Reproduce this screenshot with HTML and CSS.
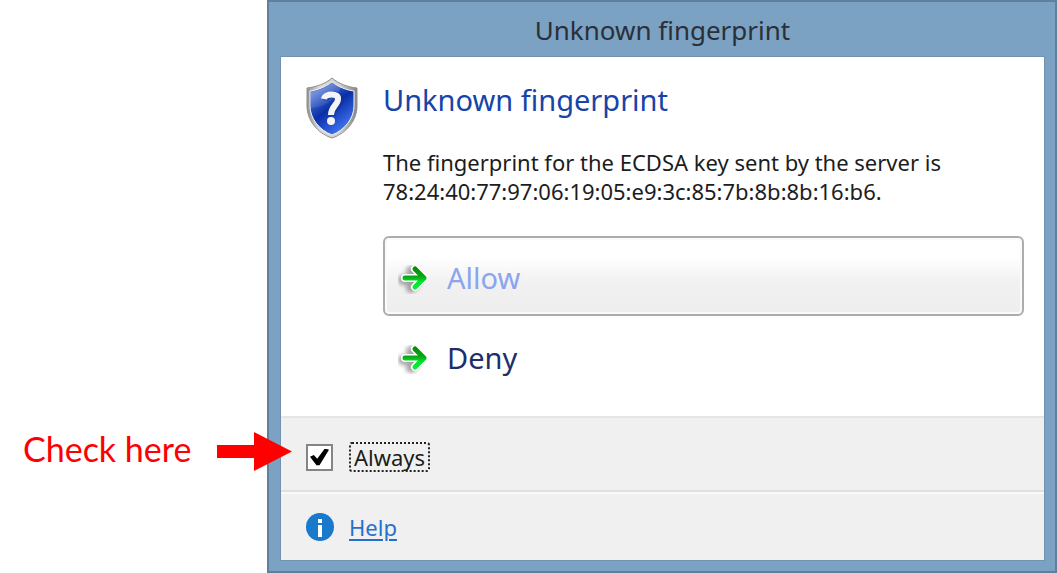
FILE: index.html
```html
<!DOCTYPE html>
<html lang="en">
<head>
<meta charset="utf-8">
<title>Unknown fingerprint</title>
<link rel="stylesheet" href="styles.css">
</head>
<body>
<div class="stage">
  <aside class="callout">
    <span class="callout-text">Check here</span>
    <svg class="callout-arrow" viewBox="0 0 75 39" aria-hidden="true"><path fill="#f00" d="M0 13H37V0L75 19.5 37 39V26H0z"/></svg>
  </aside>
  <section class="window" role="dialog" aria-labelledby="window-title">
    <header class="titlebar" id="window-title">Unknown fingerprint</header>
    <div class="client">
      <main class="message">
        <svg class="shield" viewBox="0 0 54 62" aria-hidden="true">
          <defs>
            <linearGradient id="rim" x2="1" y2="0"><stop offset="0" stop-color="#909291"/><stop offset=".25" stop-color="#dcdcdc"/><stop offset=".65" stop-color="#d0d0d0"/><stop offset="1" stop-color="#858786"/></linearGradient>
            <linearGradient id="blue" x1="0" y1="0" x2=".65" y2="1"><stop offset="0" stop-color="#6c8de0"/><stop offset=".42" stop-color="#2148b8"/><stop offset=".55" stop-color="#0b2ea8"/><stop offset="1" stop-color="#4377f4"/></linearGradient>
            <linearGradient id="shine" x2=".6" y2="1"><stop offset="0" stop-color="#fff" stop-opacity=".35"/><stop offset="1" stop-color="#fff" stop-opacity=".02"/></linearGradient>
          </defs>
          <path d="M27 1C20 7 11 10 2 11V29C2 43 12 56 27 61 42 56 52 43 52 29V11C43 10 34 7 27 1z" fill="url(#rim)" stroke="#8d8f8e"/>
          <path d="M27 5C20 10 13 13 5 14V29C5 41 14 53 27 58 40 53 49 41 49 29V14C41 13 34 10 27 5z" fill="url(#blue)" stroke="#f5f5f5"/>
          <path d="M27 6C20 11 13 14 6 15V31C17 31 31 24 36 10 33 9 30 8 27 6z" fill="url(#shine)"/>
          <path d="M20 23C22 16 36 16 35 23 35 29 27 30 27 39" fill="none" stroke="#162f86" stroke-opacity=".5" stroke-width="7"/>
          <path d="M19 22C20 16 34 16 33 22 33 28 26 29 26 38" fill="none" stroke="#f3f4f8" stroke-width="6"/>
          <circle cx="26" cy="44" r="4" fill="#f3f4f8"/>
        </svg>
        <div class="message-body">
          <h1 class="heading">Unknown fingerprint</h1>
          <p class="details">The fingerprint for the ECDSA key sent by the server is<br>78:24:40:77:97:06:19:05:e9:3c:85:7b:8b:8b:16:b6.</p>
          <button type="button" class="command command-active">
            <svg class="command-icon" viewBox="0 0 32 36" aria-hidden="true">
              <defs>
                <linearGradient id="green" gradientUnits="userSpaceOnUse" x1="0" y1="6" x2="0" y2="30"><stop offset="0" stop-color="#078507"/><stop offset=".45" stop-color="#08aa12"/><stop offset=".65" stop-color="#04e32c"/><stop offset="1" stop-color="#08f03d"/></linearGradient>
                <filter id="soft" x="-30%" y="-30%" width="160%" height="160%"><feGaussianBlur stdDeviation="2"/></filter>
              </defs>
              <g fill="none" stroke-linecap="round" stroke-linejoin="round">
                <path d="M6 20H19M14 11L22 19 14 28" stroke="#777" stroke-opacity=".65" stroke-width="10" filter="url(#soft)"/>
                <path d="M8 18H27M18 9L27 18 18 27" stroke="#fff" stroke-width="8"/>
                <path d="M8 18H27M18 9L27 18 18 27" stroke="url(#green)" stroke-width="5"/>
              </g>
            </svg>
            <span>Allow</span>
          </button>
          <button type="button" class="command">
            <svg class="command-icon" viewBox="0 0 32 36" aria-hidden="true">
              <g fill="none" stroke-linecap="round" stroke-linejoin="round">
                <path d="M6 20H19M14 11L22 19 14 28" stroke="#777" stroke-opacity=".65" stroke-width="10" filter="url(#soft)"/>
                <path d="M8 18H27M18 9L27 18 18 27" stroke="#fff" stroke-width="8"/>
                <path d="M8 18H27M18 9L27 18 18 27" stroke="url(#green)" stroke-width="5"/>
              </g>
            </svg>
            <span>Deny</span>
          </button>
        </div>
      </main>
      <div class="row options">
        <input class="check" type="checkbox" id="always" checked>
        <label class="check-label" for="always">Always</label>
      </div>
      <footer class="row help">
        <svg class="info" viewBox="0 0 28 28" aria-hidden="true"><circle cx="14" cy="14" r="14" fill="#1979ca"/><path fill="#fff" d="M12 6h4v4h-4zM12 12h4v12h-4z"/></svg>
        <a class="help-link" href="#help">Help</a>
      </footer>
    </div>
  </section>
</div>
</body>
</html>
```
FILE: styles.css
```css
* { box-sizing: border-box; }

body {
  margin: 0;
  background: #fff;
  color: #1c1c1c;
  font-family: "Noto Sans", "Open Sans", sans-serif;
}

.stage {
  display: grid;
  grid-template-columns: 267px 1fr;
  min-height: 100vh;
}

.callout {
  z-index: 1;
  display: flex;
  align-items: center;
  justify-content: space-between;
  align-self: end;
  margin: 0 -25px 100px 23px;
  color: #f00;
  font-family: Lato, "Open Sans", sans-serif;
  font-size: 34px;
  line-height: 40px;
  white-space: nowrap;
}

.callout-text { padding-bottom: 4px; }

.callout-arrow { width: 75px; height: 39px; flex: none; }

.window {
  display: flex;
  flex-direction: column;
  padding: 0 11px 11px 12px;
  border: 2px solid #5f7f9c;
  background: #7ba1c3;
}

.titlebar {
  padding: 7px 0 6px;
  font-size: 26px;
  line-height: 42px;
  text-align: center;
  color: #2a2f38;
}

.client {
  display: flex;
  flex: 1;
  flex-direction: column;
  background: #f0f0f0;
  box-shadow: 0 0 0 1px #7092b0;
}

.message {
  display: flex;
  flex: 1;
  gap: 24px;
  padding: 20px 20px 16px 24px;
  background: #fff;
}

.shield { flex: none; width: 54px; height: 62px; }

.message-body { flex: 1; }

.heading {
  margin: 3px 0 28px;
  color: #1644a8;
  font-size: 29px;
  font-weight: 400;
  line-height: 40px;
}

.details {
  margin: 0 0 30px;
  font-size: 22px;
  line-height: 29px;
}

.command {
  display: flex;
  align-items: center;
  gap: 18px;
  width: 100%;
  height: 80px;
  padding: 4px 12px 0;
  border: 2px solid transparent;
  border-radius: 6px;
  background: none;
  color: #1d2f6b;
  font-family: inherit;
  font-size: 29px;
  line-height: 40px;
}

.command-active {
  border-color: #adadad;
  background: linear-gradient(#fff 25%, #f1f1f1 60%, #eee);
  box-shadow: inset 0 0 0 2px #fafafa;
  color: #8aa5ee;
}

.command-icon { width: 32px; height: 36px; }

.row {
  display: flex;
  align-items: center;
  padding: 0 25px;
}

.options {
  height: 76px;
  gap: 16px;
  padding-top: 6px;
  border-top: 2px solid #e5e5e5;
  border-bottom: 2px solid #dfdfdf;
}

.check {
  appearance: none;
  width: 27px;
  height: 27px;
  margin: 0;
  border: 2px solid #858585;
  background: #fff;
  display: grid;
  place-items: center;
}

.check:checked::before {
  content: "";
  width: 19px;
  height: 17px;
  background: #000;
  clip-path: polygon(0 49%, 20% 38%, 38% 60%, 78% 0, 100% 8%, 50% 98%, 34% 98%);
}

.check-label {
  padding: 0 3px;
  border: 2px dotted #222;
  border-radius: 3px;
  font-size: 22px;
  line-height: 26px;
}

.help {
  height: 68px;
  gap: 15px;
  border-top: 2px solid #f9f9f9;
}

.info { width: 28px; height: 28px; }

.help-link {
  color: #2470cf;
  font-size: 22px;
  line-height: 30px;
  text-underline-offset: 3px;
  text-decoration-thickness: 2px;
}
```
